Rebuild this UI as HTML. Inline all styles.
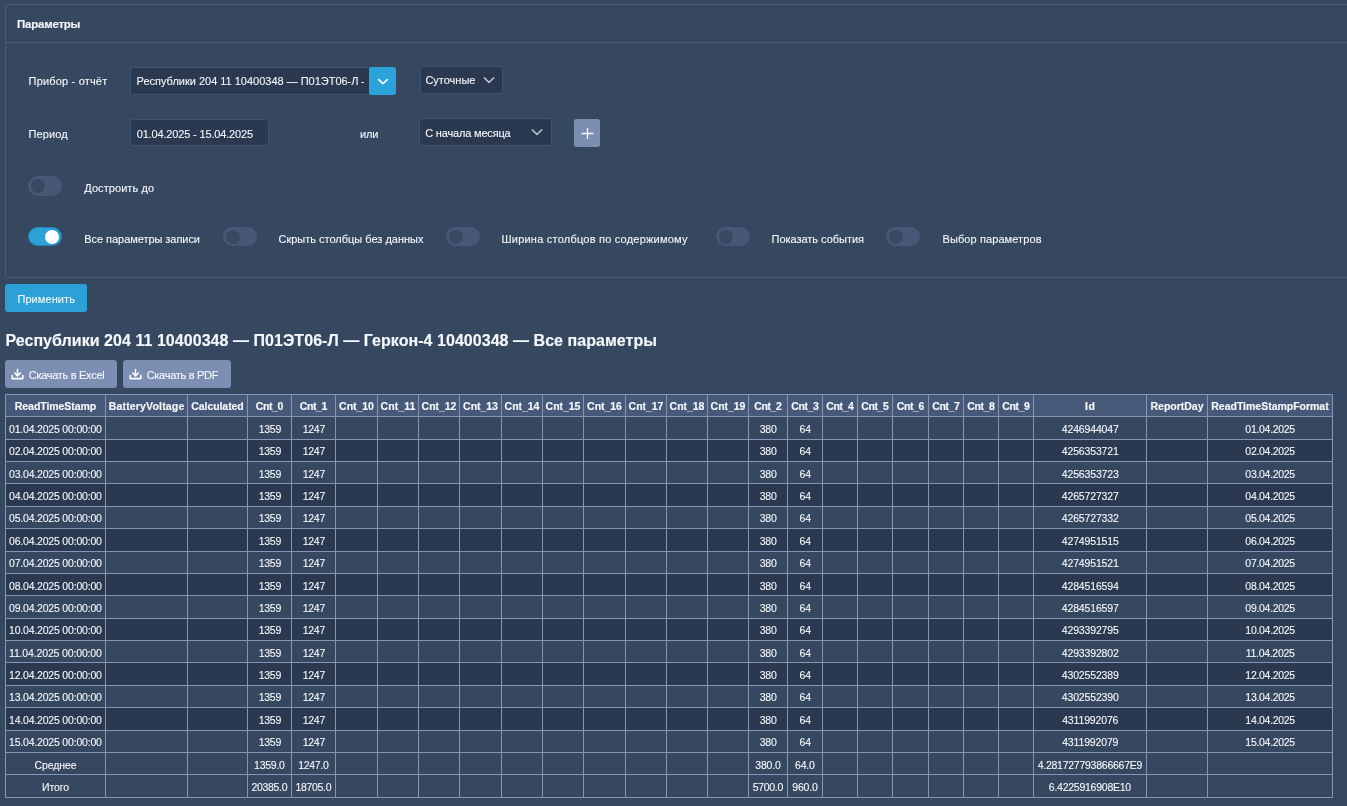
<!DOCTYPE html>
<html lang="ru"><head><meta charset="utf-8"><title>Параметры</title>
<style>
html,body{margin:0;padding:0;background:#36485f;}
body{width:1347px;height:806px;overflow:hidden;position:relative;will-change:transform;font-family:"Liberation Sans",sans-serif;}
.b{position:absolute;box-sizing:border-box;}
.t{position:absolute;white-space:pre;-webkit-text-stroke:0.1px currentColor;}
</style></head><body>
<div class="b" style="left:5px;top:4px;width:1360px;height:274px;border:1px solid #4a5c78;border-radius:3px;"></div>
<div class="b" style="left:6px;top:42px;width:1360px;height:1px;background:#4a5c78;"></div>
<div class="t" style="left:17.10px;top:16.20px;font-size:11.5px;line-height:16px;color:#f2f5fa;font-weight:bold;-webkit-text-stroke:0.15px currentColor;letter-spacing:-0.251px;">Параметры</div>
<div class="t" style="left:28.60px;top:73.40px;font-size:11px;line-height:16px;color:#f6f8fc;letter-spacing:0.178px;">Прибор - отчёт</div>
<div class="b" style="left:130px;top:67px;width:266px;height:28px;background:#2a3850;border:1px solid #3f5270;border-radius:3px;"></div>
<div class="b" style="left:131px;top:69px;width:233.4px;height:25px;overflow:hidden">
<div class="t" style="left:5.60px;top:3.90px;font-size:11px;line-height:16px;color:#f4f7fb;letter-spacing:-0.010px;white-space:nowrap;">Республики 204 11 10400348 — П01ЭТ06-Л — Геркон-4 10400348</div>
</div>
<div class="b" style="left:369px;top:67px;width:27px;height:28px;background:#2aa3db;border-radius:2px 3px 3px 2px;"></div>
<svg class="b" style="left:377.2px;top:76.5px" width="12" height="9" viewBox="0 0 12 9"><path d="M1.7 2.7 L6 6.6 L10.3 2.7" fill="none" stroke="#f2fbff" stroke-width="1.8" stroke-linecap="round" stroke-linejoin="round"/></svg>
<div class="b" style="left:420px;top:66px;width:83px;height:28px;background:#2a3850;border:1px solid #3f5270;border-radius:3px;"></div>
<div class="t" style="left:425.40px;top:72.20px;font-size:11px;line-height:16px;color:#f6f8fc;letter-spacing:-0.009px;">Суточные</div>
<svg class="b" style="left:483.3px;top:76.2px" width="12" height="9" viewBox="0 0 12 9"><path d="M1.3 1.9 L6 6.4 L10.7 1.9" fill="none" stroke="#b3bed0" stroke-width="1.5" stroke-linecap="round" stroke-linejoin="round"/></svg>
<div class="t" style="left:28.40px;top:125.80px;font-size:11px;line-height:16px;color:#f6f8fc;letter-spacing:0.144px;">Период</div>
<div class="b" style="left:130px;top:119px;width:139px;height:27px;background:#2a3850;border:1px solid #3f5270;border-radius:3px;"></div>
<div class="t" style="left:136.70px;top:125.80px;font-size:11px;line-height:16px;color:#f4f7fb;letter-spacing:-0.158px;">01.04.2025 - 15.04.2025</div>
<div class="t" style="left:360.00px;top:125.70px;font-size:11px;line-height:16px;color:#f6f8fc;letter-spacing:-0.154px;">или</div>
<div class="b" style="left:419px;top:118px;width:133px;height:28px;background:#2a3850;border:1px solid #3f5270;border-radius:3px;"></div>
<div class="t" style="left:425.20px;top:125.00px;font-size:11px;line-height:16px;color:#f6f8fc;letter-spacing:-0.175px;">С начала месяца</div>
<svg class="b" style="left:531px;top:128.2px" width="12" height="9" viewBox="0 0 12 9"><path d="M1.3 1.9 L6 6.4 L10.7 1.9" fill="none" stroke="#b3bed0" stroke-width="1.5" stroke-linecap="round" stroke-linejoin="round"/></svg>
<div class="b" style="left:574px;top:119px;width:26px;height:28px;background:#7c8eb2;border-radius:2.5px;"></div>
<svg class="b" style="left:581px;top:127px" width="13" height="13" viewBox="0 0 13 13"><path d="M6.5 0.9 V12.1 M0.6 6.5 H12.4" fill="none" stroke="#fff" stroke-width="1.3"/></svg>
<div class="b" style="left:28px;top:176.1px;width:33.6px;height:19.5px;background:#465876;border-radius:10px;"></div>
<div class="b" style="left:30.6px;top:179.0px;width:14px;height:14px;background:#384962;border-radius:7px;"></div>
<div class="t" style="left:84.30px;top:179.90px;font-size:11px;line-height:16px;color:#f6f8fc;letter-spacing:0.066px;">Достроить до</div>
<div class="b" style="left:28px;top:226.6px;width:33.6px;height:19.5px;background:#2ba1d8;border:1px solid #2381b4;border-radius:10px;"></div>
<div class="b" style="left:45px;top:229.5px;width:14px;height:14px;background:#ffffff;border-radius:7px;"></div>
<div class="t" style="left:84.30px;top:231.00px;font-size:11px;line-height:16px;color:#f6f8fc;letter-spacing:-0.051px;">Все параметры записи</div>
<div class="b" style="left:223.2px;top:226.6px;width:33.6px;height:19.5px;background:#465876;border-radius:10px;"></div>
<div class="b" style="left:225.79999999999998px;top:229.5px;width:14px;height:14px;background:#384962;border-radius:7px;"></div>
<div class="t" style="left:278.50px;top:231.00px;font-size:11px;line-height:16px;color:#f6f8fc;letter-spacing:-0.005px;">Скрыть столбцы без данных</div>
<div class="b" style="left:446.2px;top:226.6px;width:33.6px;height:19.5px;background:#465876;border-radius:10px;"></div>
<div class="b" style="left:448.8px;top:229.5px;width:14px;height:14px;background:#384962;border-radius:7px;"></div>
<div class="t" style="left:501.50px;top:231.00px;font-size:11px;line-height:16px;color:#f6f8fc;letter-spacing:0.221px;">Ширина столбцов по содержимому</div>
<div class="b" style="left:716px;top:226.6px;width:33.6px;height:19.5px;background:#465876;border-radius:10px;"></div>
<div class="b" style="left:718.6px;top:229.5px;width:14px;height:14px;background:#384962;border-radius:7px;"></div>
<div class="t" style="left:771.50px;top:231.00px;font-size:11px;line-height:16px;color:#f6f8fc;letter-spacing:-0.027px;">Показать события</div>
<div class="b" style="left:886.4px;top:226.6px;width:33.6px;height:19.5px;background:#465876;border-radius:10px;"></div>
<div class="b" style="left:889.0px;top:229.5px;width:14px;height:14px;background:#384962;border-radius:7px;"></div>
<div class="t" style="left:942.50px;top:231.00px;font-size:11px;line-height:16px;color:#f6f8fc;letter-spacing:0.095px;">Выбор параметров</div>
<div class="b" style="left:5px;top:284px;width:82px;height:28px;background:#2ba1d8;border-radius:3px;"></div>
<div class="t" style="left:17.40px;top:291.20px;font-size:11px;line-height:16px;color:#eefaff;letter-spacing:0.083px;">Применить</div>
<div class="t" style="left:5.40px;top:329.50px;font-size:16px;line-height:22px;color:#f4f7fb;font-weight:bold;-webkit-text-stroke:0.15px currentColor;letter-spacing:0.046px;">Республики 204 11 10400348 — П01ЭТ06-Л — Геркон-4 10400348 — Все параметры</div>
<div class="b" style="left:5px;top:360px;width:112px;height:28px;background:#7c8eb2;border-radius:3px;"></div>
<svg class="b" style="left:10.5px;top:368.2px" width="13" height="12" viewBox="0 0 13 12"><path d="M6.5 1.5 V7.6 M3.6 5 L6.5 7.9 L9.4 5" fill="none" stroke="#fff" stroke-width="1.5" stroke-linecap="round" stroke-linejoin="round"/><path d="M1.2 7.6 V10.6 H11.8 V7.6" fill="none" stroke="#fff" stroke-width="1.6" stroke-linecap="round" stroke-linejoin="round"/></svg>
<div class="t" style="left:28.80px;top:367.30px;font-size:11px;line-height:16px;color:#f7f9fc;letter-spacing:-0.300px;">Скачать в Excel</div>
<div class="b" style="left:123px;top:360px;width:108px;height:28px;background:#7c8eb2;border-radius:3px;"></div>
<svg class="b" style="left:128.7px;top:368.2px" width="13" height="12" viewBox="0 0 13 12"><path d="M6.5 1.5 V7.6 M3.6 5 L6.5 7.9 L9.4 5" fill="none" stroke="#fff" stroke-width="1.5" stroke-linecap="round" stroke-linejoin="round"/><path d="M1.2 7.6 V10.6 H11.8 V7.6" fill="none" stroke="#fff" stroke-width="1.6" stroke-linecap="round" stroke-linejoin="round"/></svg>
<div class="t" style="left:146.70px;top:367.30px;font-size:11px;line-height:16px;color:#f7f9fc;letter-spacing:-0.284px;">Скачать в PDF</div>
<div class="b" style="left:5px;top:394.00px;width:1328px;height:22px;background:#465978"></div>
<div class="b" style="left:5px;top:416.00px;width:1328px;height:23px;background:#36485f"></div>
<div class="b" style="left:5px;top:439.00px;width:1328px;height:22px;background:#2b3950"></div>
<div class="b" style="left:5px;top:461.00px;width:1328px;height:22px;background:#36485f"></div>
<div class="b" style="left:5px;top:483.00px;width:1328px;height:23px;background:#2b3950"></div>
<div class="b" style="left:5px;top:506.00px;width:1328px;height:22px;background:#36485f"></div>
<div class="b" style="left:5px;top:528.00px;width:1328px;height:23px;background:#2b3950"></div>
<div class="b" style="left:5px;top:551.00px;width:1328px;height:22px;background:#36485f"></div>
<div class="b" style="left:5px;top:573.00px;width:1328px;height:22px;background:#2b3950"></div>
<div class="b" style="left:5px;top:595.00px;width:1328px;height:23px;background:#36485f"></div>
<div class="b" style="left:5px;top:618.00px;width:1328px;height:22px;background:#2b3950"></div>
<div class="b" style="left:5px;top:640.00px;width:1328px;height:22px;background:#36485f"></div>
<div class="b" style="left:5px;top:662.00px;width:1328px;height:23px;background:#2b3950"></div>
<div class="b" style="left:5px;top:685.00px;width:1328px;height:22px;background:#36485f"></div>
<div class="b" style="left:5px;top:707.00px;width:1328px;height:23px;background:#2b3950"></div>
<div class="b" style="left:5px;top:730.00px;width:1328px;height:22px;background:#36485f"></div>
<div class="b" style="left:5px;top:752.00px;width:1328px;height:22px;background:#36485f"></div>
<div class="b" style="left:5px;top:774.00px;width:1328px;height:23px;background:#36485f"></div>
<div class="b" style="left:5px;top:394.00px;width:1328px;height:1px;background:#8495b5"></div>
<div class="b" style="left:5px;top:416.00px;width:1328px;height:1px;background:#8495b5"></div>
<div class="b" style="left:5px;top:439.00px;width:1328px;height:1px;background:#8495b5"></div>
<div class="b" style="left:5px;top:461.00px;width:1328px;height:1px;background:#8495b5"></div>
<div class="b" style="left:5px;top:483.00px;width:1328px;height:1px;background:#8495b5"></div>
<div class="b" style="left:5px;top:506.00px;width:1328px;height:1px;background:#8495b5"></div>
<div class="b" style="left:5px;top:528.00px;width:1328px;height:1px;background:#8495b5"></div>
<div class="b" style="left:5px;top:551.00px;width:1328px;height:1px;background:#8495b5"></div>
<div class="b" style="left:5px;top:573.00px;width:1328px;height:1px;background:#8495b5"></div>
<div class="b" style="left:5px;top:595.00px;width:1328px;height:1px;background:#8495b5"></div>
<div class="b" style="left:5px;top:618.00px;width:1328px;height:1px;background:#8495b5"></div>
<div class="b" style="left:5px;top:640.00px;width:1328px;height:1px;background:#8495b5"></div>
<div class="b" style="left:5px;top:662.00px;width:1328px;height:1px;background:#8495b5"></div>
<div class="b" style="left:5px;top:685.00px;width:1328px;height:1px;background:#8495b5"></div>
<div class="b" style="left:5px;top:707.00px;width:1328px;height:1px;background:#8495b5"></div>
<div class="b" style="left:5px;top:730.00px;width:1328px;height:1px;background:#8495b5"></div>
<div class="b" style="left:5px;top:752.00px;width:1328px;height:1px;background:#8495b5"></div>
<div class="b" style="left:5px;top:774.00px;width:1328px;height:1px;background:#8495b5"></div>
<div class="b" style="left:5px;top:797.00px;width:1328px;height:1px;background:#8495b5"></div>
<div class="b" style="left:5px;top:394.00px;width:1px;height:404.00px;background:#8495b5"></div>
<div class="b" style="left:105px;top:394.00px;width:1px;height:404.00px;background:#8495b5"></div>
<div class="b" style="left:187px;top:394.00px;width:1px;height:404.00px;background:#8495b5"></div>
<div class="b" style="left:247px;top:394.00px;width:1px;height:404.00px;background:#8495b5"></div>
<div class="b" style="left:291px;top:394.00px;width:1px;height:404.00px;background:#8495b5"></div>
<div class="b" style="left:335px;top:394.00px;width:1px;height:404.00px;background:#8495b5"></div>
<div class="b" style="left:377px;top:394.00px;width:1px;height:404.00px;background:#8495b5"></div>
<div class="b" style="left:418px;top:394.00px;width:1px;height:404.00px;background:#8495b5"></div>
<div class="b" style="left:459px;top:394.00px;width:1px;height:404.00px;background:#8495b5"></div>
<div class="b" style="left:501px;top:394.00px;width:1px;height:404.00px;background:#8495b5"></div>
<div class="b" style="left:542px;top:394.00px;width:1px;height:404.00px;background:#8495b5"></div>
<div class="b" style="left:583px;top:394.00px;width:1px;height:404.00px;background:#8495b5"></div>
<div class="b" style="left:625px;top:394.00px;width:1px;height:404.00px;background:#8495b5"></div>
<div class="b" style="left:666px;top:394.00px;width:1px;height:404.00px;background:#8495b5"></div>
<div class="b" style="left:707px;top:394.00px;width:1px;height:404.00px;background:#8495b5"></div>
<div class="b" style="left:748px;top:394.00px;width:1px;height:404.00px;background:#8495b5"></div>
<div class="b" style="left:787px;top:394.00px;width:1px;height:404.00px;background:#8495b5"></div>
<div class="b" style="left:822px;top:394.00px;width:1px;height:404.00px;background:#8495b5"></div>
<div class="b" style="left:857px;top:394.00px;width:1px;height:404.00px;background:#8495b5"></div>
<div class="b" style="left:892px;top:394.00px;width:1px;height:404.00px;background:#8495b5"></div>
<div class="b" style="left:928px;top:394.00px;width:1px;height:404.00px;background:#8495b5"></div>
<div class="b" style="left:963px;top:394.00px;width:1px;height:404.00px;background:#8495b5"></div>
<div class="b" style="left:998px;top:394.00px;width:1px;height:404.00px;background:#8495b5"></div>
<div class="b" style="left:1033px;top:394.00px;width:1px;height:404.00px;background:#8495b5"></div>
<div class="b" style="left:1146px;top:394.00px;width:1px;height:404.00px;background:#8495b5"></div>
<div class="b" style="left:1207px;top:394.00px;width:1px;height:404.00px;background:#8495b5"></div>
<div class="b" style="left:1332px;top:394.00px;width:1px;height:404.00px;background:#8495b5"></div>
<div class="t" style="left:14.80px;top:398.30px;font-size:10.5px;line-height:16px;color:#f6f8fc;font-weight:bold;-webkit-text-stroke:0.15px currentColor;letter-spacing:-0.057px;">ReadTimeStamp</div>
<div class="t" style="left:108.75px;top:398.30px;font-size:10.5px;line-height:16px;color:#f6f8fc;font-weight:bold;-webkit-text-stroke:0.15px currentColor;letter-spacing:0.167px;">BatteryVoltage</div>
<div class="t" style="left:191.25px;top:398.30px;font-size:10.5px;line-height:16px;color:#f6f8fc;font-weight:bold;-webkit-text-stroke:0.15px currentColor;letter-spacing:-0.067px;">Calculated</div>
<div class="t" style="left:255.70px;top:398.30px;font-size:10.5px;line-height:16px;color:#f6f8fc;font-weight:bold;-webkit-text-stroke:0.15px currentColor;letter-spacing:-0.393px;">Cnt_0</div>
<div class="t" style="left:299.70px;top:398.30px;font-size:10.5px;line-height:16px;color:#f6f8fc;font-weight:bold;-webkit-text-stroke:0.15px currentColor;letter-spacing:-0.393px;">Cnt_1</div>
<div class="t" style="left:339.12px;top:398.30px;font-size:10.5px;line-height:16px;color:#f6f8fc;font-weight:bold;-webkit-text-stroke:0.15px currentColor;letter-spacing:-0.053px;">Cnt_10</div>
<div class="t" style="left:380.62px;top:398.30px;font-size:10.5px;line-height:16px;color:#f6f8fc;font-weight:bold;-webkit-text-stroke:0.15px currentColor;letter-spacing:0.063px;">Cnt_11</div>
<div class="t" style="left:421.62px;top:398.30px;font-size:10.5px;line-height:16px;color:#f6f8fc;font-weight:bold;-webkit-text-stroke:0.15px currentColor;letter-spacing:-0.053px;">Cnt_12</div>
<div class="t" style="left:463.12px;top:398.30px;font-size:10.5px;line-height:16px;color:#f6f8fc;font-weight:bold;-webkit-text-stroke:0.15px currentColor;letter-spacing:-0.053px;">Cnt_13</div>
<div class="t" style="left:504.62px;top:398.30px;font-size:10.5px;line-height:16px;color:#f6f8fc;font-weight:bold;-webkit-text-stroke:0.15px currentColor;letter-spacing:-0.053px;">Cnt_14</div>
<div class="t" style="left:545.62px;top:398.30px;font-size:10.5px;line-height:16px;color:#f6f8fc;font-weight:bold;-webkit-text-stroke:0.15px currentColor;letter-spacing:-0.053px;">Cnt_15</div>
<div class="t" style="left:587.12px;top:398.30px;font-size:10.5px;line-height:16px;color:#f6f8fc;font-weight:bold;-webkit-text-stroke:0.15px currentColor;letter-spacing:-0.053px;">Cnt_16</div>
<div class="t" style="left:628.62px;top:398.30px;font-size:10.5px;line-height:16px;color:#f6f8fc;font-weight:bold;-webkit-text-stroke:0.15px currentColor;letter-spacing:-0.053px;">Cnt_17</div>
<div class="t" style="left:669.62px;top:398.30px;font-size:10.5px;line-height:16px;color:#f6f8fc;font-weight:bold;-webkit-text-stroke:0.15px currentColor;letter-spacing:-0.053px;">Cnt_18</div>
<div class="t" style="left:710.62px;top:398.30px;font-size:10.5px;line-height:16px;color:#f6f8fc;font-weight:bold;-webkit-text-stroke:0.15px currentColor;letter-spacing:-0.053px;">Cnt_19</div>
<div class="t" style="left:754.20px;top:398.30px;font-size:10.5px;line-height:16px;color:#f6f8fc;font-weight:bold;-webkit-text-stroke:0.15px currentColor;letter-spacing:-0.393px;">Cnt_2</div>
<div class="t" style="left:791.20px;top:398.30px;font-size:10.5px;line-height:16px;color:#f6f8fc;font-weight:bold;-webkit-text-stroke:0.15px currentColor;letter-spacing:-0.393px;">Cnt_3</div>
<div class="t" style="left:826.20px;top:398.30px;font-size:10.5px;line-height:16px;color:#f6f8fc;font-weight:bold;-webkit-text-stroke:0.15px currentColor;letter-spacing:-0.393px;">Cnt_4</div>
<div class="t" style="left:861.20px;top:398.30px;font-size:10.5px;line-height:16px;color:#f6f8fc;font-weight:bold;-webkit-text-stroke:0.15px currentColor;letter-spacing:-0.393px;">Cnt_5</div>
<div class="t" style="left:896.70px;top:398.30px;font-size:10.5px;line-height:16px;color:#f6f8fc;font-weight:bold;-webkit-text-stroke:0.15px currentColor;letter-spacing:-0.393px;">Cnt_6</div>
<div class="t" style="left:932.20px;top:398.30px;font-size:10.5px;line-height:16px;color:#f6f8fc;font-weight:bold;-webkit-text-stroke:0.15px currentColor;letter-spacing:-0.393px;">Cnt_7</div>
<div class="t" style="left:967.20px;top:398.30px;font-size:10.5px;line-height:16px;color:#f6f8fc;font-weight:bold;-webkit-text-stroke:0.15px currentColor;letter-spacing:-0.393px;">Cnt_8</div>
<div class="t" style="left:1002.20px;top:398.30px;font-size:10.5px;line-height:16px;color:#f6f8fc;font-weight:bold;-webkit-text-stroke:0.15px currentColor;letter-spacing:-0.393px;">Cnt_9</div>
<div class="t" style="left:1085.00px;top:398.30px;font-size:10.5px;line-height:16px;color:#f6f8fc;font-weight:bold;-webkit-text-stroke:0.15px currentColor;letter-spacing:0.669px;">Id</div>
<div class="t" style="left:1150.50px;top:398.30px;font-size:10.5px;line-height:16px;color:#f6f8fc;font-weight:bold;-webkit-text-stroke:0.15px currentColor;letter-spacing:-0.012px;">ReportDay</div>
<div class="t" style="left:1211.30px;top:398.30px;font-size:10.5px;line-height:16px;color:#f6f8fc;font-weight:bold;-webkit-text-stroke:0.15px currentColor;letter-spacing:-0.015px;">ReadTimeStampFormat</div>
<div class="t" style="left:9.00px;top:420.78px;font-size:10.5px;line-height:16px;color:#f6f8fc;letter-spacing:-0.191px;">01.04.2025 00:00:00</div>
<div class="t" style="left:258.70px;top:420.78px;font-size:10.5px;line-height:16px;color:#f6f8fc;letter-spacing:-0.250px;">1359</div>
<div class="t" style="left:302.77px;top:420.78px;font-size:10.5px;line-height:16px;color:#f6f8fc;letter-spacing:-0.300px;">1247</div>
<div class="t" style="left:759.64px;top:420.78px;font-size:10.5px;line-height:16px;color:#f6f8fc;letter-spacing:-0.100px;">380</div>
<div class="t" style="left:799.56px;top:420.78px;font-size:10.5px;line-height:16px;color:#f6f8fc;letter-spacing:-0.200px;">64</div>
<div class="t" style="left:1061.78px;top:420.78px;font-size:10.5px;line-height:16px;color:#f6f8fc;letter-spacing:-0.150px;">4246944047</div>
<div class="t" style="left:1245.37px;top:420.78px;font-size:10.5px;line-height:16px;color:#f6f8fc;letter-spacing:-0.300px;">01.04.2025</div>
<div class="t" style="left:9.00px;top:443.18px;font-size:10.5px;line-height:16px;color:#f6f8fc;letter-spacing:-0.191px;">02.04.2025 00:00:00</div>
<div class="t" style="left:258.70px;top:443.18px;font-size:10.5px;line-height:16px;color:#f6f8fc;letter-spacing:-0.250px;">1359</div>
<div class="t" style="left:302.77px;top:443.18px;font-size:10.5px;line-height:16px;color:#f6f8fc;letter-spacing:-0.300px;">1247</div>
<div class="t" style="left:759.64px;top:443.18px;font-size:10.5px;line-height:16px;color:#f6f8fc;letter-spacing:-0.100px;">380</div>
<div class="t" style="left:799.56px;top:443.18px;font-size:10.5px;line-height:16px;color:#f6f8fc;letter-spacing:-0.200px;">64</div>
<div class="t" style="left:1061.78px;top:443.18px;font-size:10.5px;line-height:16px;color:#f6f8fc;letter-spacing:-0.150px;">4256353721</div>
<div class="t" style="left:1245.37px;top:443.18px;font-size:10.5px;line-height:16px;color:#f6f8fc;letter-spacing:-0.300px;">02.04.2025</div>
<div class="t" style="left:9.00px;top:465.56px;font-size:10.5px;line-height:16px;color:#f6f8fc;letter-spacing:-0.191px;">03.04.2025 00:00:00</div>
<div class="t" style="left:258.70px;top:465.56px;font-size:10.5px;line-height:16px;color:#f6f8fc;letter-spacing:-0.250px;">1359</div>
<div class="t" style="left:302.77px;top:465.56px;font-size:10.5px;line-height:16px;color:#f6f8fc;letter-spacing:-0.300px;">1247</div>
<div class="t" style="left:759.64px;top:465.56px;font-size:10.5px;line-height:16px;color:#f6f8fc;letter-spacing:-0.100px;">380</div>
<div class="t" style="left:799.56px;top:465.56px;font-size:10.5px;line-height:16px;color:#f6f8fc;letter-spacing:-0.200px;">64</div>
<div class="t" style="left:1061.78px;top:465.56px;font-size:10.5px;line-height:16px;color:#f6f8fc;letter-spacing:-0.150px;">4256353723</div>
<div class="t" style="left:1245.37px;top:465.56px;font-size:10.5px;line-height:16px;color:#f6f8fc;letter-spacing:-0.300px;">03.04.2025</div>
<div class="t" style="left:9.00px;top:487.95px;font-size:10.5px;line-height:16px;color:#f6f8fc;letter-spacing:-0.191px;">04.04.2025 00:00:00</div>
<div class="t" style="left:258.70px;top:487.95px;font-size:10.5px;line-height:16px;color:#f6f8fc;letter-spacing:-0.250px;">1359</div>
<div class="t" style="left:302.77px;top:487.95px;font-size:10.5px;line-height:16px;color:#f6f8fc;letter-spacing:-0.300px;">1247</div>
<div class="t" style="left:759.64px;top:487.95px;font-size:10.5px;line-height:16px;color:#f6f8fc;letter-spacing:-0.100px;">380</div>
<div class="t" style="left:799.56px;top:487.95px;font-size:10.5px;line-height:16px;color:#f6f8fc;letter-spacing:-0.200px;">64</div>
<div class="t" style="left:1061.78px;top:487.95px;font-size:10.5px;line-height:16px;color:#f6f8fc;letter-spacing:-0.150px;">4265727327</div>
<div class="t" style="left:1245.37px;top:487.95px;font-size:10.5px;line-height:16px;color:#f6f8fc;letter-spacing:-0.300px;">04.04.2025</div>
<div class="t" style="left:9.00px;top:510.35px;font-size:10.5px;line-height:16px;color:#f6f8fc;letter-spacing:-0.191px;">05.04.2025 00:00:00</div>
<div class="t" style="left:258.70px;top:510.35px;font-size:10.5px;line-height:16px;color:#f6f8fc;letter-spacing:-0.250px;">1359</div>
<div class="t" style="left:302.77px;top:510.35px;font-size:10.5px;line-height:16px;color:#f6f8fc;letter-spacing:-0.300px;">1247</div>
<div class="t" style="left:759.64px;top:510.35px;font-size:10.5px;line-height:16px;color:#f6f8fc;letter-spacing:-0.100px;">380</div>
<div class="t" style="left:799.56px;top:510.35px;font-size:10.5px;line-height:16px;color:#f6f8fc;letter-spacing:-0.200px;">64</div>
<div class="t" style="left:1061.78px;top:510.35px;font-size:10.5px;line-height:16px;color:#f6f8fc;letter-spacing:-0.150px;">4265727332</div>
<div class="t" style="left:1245.37px;top:510.35px;font-size:10.5px;line-height:16px;color:#f6f8fc;letter-spacing:-0.300px;">05.04.2025</div>
<div class="t" style="left:9.00px;top:532.74px;font-size:10.5px;line-height:16px;color:#f6f8fc;letter-spacing:-0.191px;">06.04.2025 00:00:00</div>
<div class="t" style="left:258.70px;top:532.74px;font-size:10.5px;line-height:16px;color:#f6f8fc;letter-spacing:-0.250px;">1359</div>
<div class="t" style="left:302.77px;top:532.74px;font-size:10.5px;line-height:16px;color:#f6f8fc;letter-spacing:-0.300px;">1247</div>
<div class="t" style="left:759.64px;top:532.74px;font-size:10.5px;line-height:16px;color:#f6f8fc;letter-spacing:-0.100px;">380</div>
<div class="t" style="left:799.56px;top:532.74px;font-size:10.5px;line-height:16px;color:#f6f8fc;letter-spacing:-0.200px;">64</div>
<div class="t" style="left:1061.78px;top:532.74px;font-size:10.5px;line-height:16px;color:#f6f8fc;letter-spacing:-0.150px;">4274951515</div>
<div class="t" style="left:1245.37px;top:532.74px;font-size:10.5px;line-height:16px;color:#f6f8fc;letter-spacing:-0.300px;">06.04.2025</div>
<div class="t" style="left:9.00px;top:555.12px;font-size:10.5px;line-height:16px;color:#f6f8fc;letter-spacing:-0.191px;">07.04.2025 00:00:00</div>
<div class="t" style="left:258.70px;top:555.12px;font-size:10.5px;line-height:16px;color:#f6f8fc;letter-spacing:-0.250px;">1359</div>
<div class="t" style="left:302.77px;top:555.12px;font-size:10.5px;line-height:16px;color:#f6f8fc;letter-spacing:-0.300px;">1247</div>
<div class="t" style="left:759.64px;top:555.12px;font-size:10.5px;line-height:16px;color:#f6f8fc;letter-spacing:-0.100px;">380</div>
<div class="t" style="left:799.56px;top:555.12px;font-size:10.5px;line-height:16px;color:#f6f8fc;letter-spacing:-0.200px;">64</div>
<div class="t" style="left:1061.78px;top:555.12px;font-size:10.5px;line-height:16px;color:#f6f8fc;letter-spacing:-0.150px;">4274951521</div>
<div class="t" style="left:1245.37px;top:555.12px;font-size:10.5px;line-height:16px;color:#f6f8fc;letter-spacing:-0.300px;">07.04.2025</div>
<div class="t" style="left:9.00px;top:577.52px;font-size:10.5px;line-height:16px;color:#f6f8fc;letter-spacing:-0.191px;">08.04.2025 00:00:00</div>
<div class="t" style="left:258.70px;top:577.52px;font-size:10.5px;line-height:16px;color:#f6f8fc;letter-spacing:-0.250px;">1359</div>
<div class="t" style="left:302.77px;top:577.52px;font-size:10.5px;line-height:16px;color:#f6f8fc;letter-spacing:-0.300px;">1247</div>
<div class="t" style="left:759.64px;top:577.52px;font-size:10.5px;line-height:16px;color:#f6f8fc;letter-spacing:-0.100px;">380</div>
<div class="t" style="left:799.56px;top:577.52px;font-size:10.5px;line-height:16px;color:#f6f8fc;letter-spacing:-0.200px;">64</div>
<div class="t" style="left:1061.78px;top:577.52px;font-size:10.5px;line-height:16px;color:#f6f8fc;letter-spacing:-0.150px;">4284516594</div>
<div class="t" style="left:1245.37px;top:577.52px;font-size:10.5px;line-height:16px;color:#f6f8fc;letter-spacing:-0.300px;">08.04.2025</div>
<div class="t" style="left:9.00px;top:599.90px;font-size:10.5px;line-height:16px;color:#f6f8fc;letter-spacing:-0.191px;">09.04.2025 00:00:00</div>
<div class="t" style="left:258.70px;top:599.90px;font-size:10.5px;line-height:16px;color:#f6f8fc;letter-spacing:-0.250px;">1359</div>
<div class="t" style="left:302.77px;top:599.90px;font-size:10.5px;line-height:16px;color:#f6f8fc;letter-spacing:-0.300px;">1247</div>
<div class="t" style="left:759.64px;top:599.90px;font-size:10.5px;line-height:16px;color:#f6f8fc;letter-spacing:-0.100px;">380</div>
<div class="t" style="left:799.56px;top:599.90px;font-size:10.5px;line-height:16px;color:#f6f8fc;letter-spacing:-0.200px;">64</div>
<div class="t" style="left:1061.78px;top:599.90px;font-size:10.5px;line-height:16px;color:#f6f8fc;letter-spacing:-0.150px;">4284516597</div>
<div class="t" style="left:1245.37px;top:599.90px;font-size:10.5px;line-height:16px;color:#f6f8fc;letter-spacing:-0.300px;">09.04.2025</div>
<div class="t" style="left:9.00px;top:622.30px;font-size:10.5px;line-height:16px;color:#f6f8fc;letter-spacing:-0.191px;">10.04.2025 00:00:00</div>
<div class="t" style="left:258.70px;top:622.30px;font-size:10.5px;line-height:16px;color:#f6f8fc;letter-spacing:-0.250px;">1359</div>
<div class="t" style="left:302.77px;top:622.30px;font-size:10.5px;line-height:16px;color:#f6f8fc;letter-spacing:-0.300px;">1247</div>
<div class="t" style="left:759.64px;top:622.30px;font-size:10.5px;line-height:16px;color:#f6f8fc;letter-spacing:-0.100px;">380</div>
<div class="t" style="left:799.56px;top:622.30px;font-size:10.5px;line-height:16px;color:#f6f8fc;letter-spacing:-0.200px;">64</div>
<div class="t" style="left:1061.78px;top:622.30px;font-size:10.5px;line-height:16px;color:#f6f8fc;letter-spacing:-0.150px;">4293392795</div>
<div class="t" style="left:1245.37px;top:622.30px;font-size:10.5px;line-height:16px;color:#f6f8fc;letter-spacing:-0.300px;">10.04.2025</div>
<div class="t" style="left:9.00px;top:644.69px;font-size:10.5px;line-height:16px;color:#f6f8fc;letter-spacing:-0.148px;">11.04.2025 00:00:00</div>
<div class="t" style="left:258.70px;top:644.69px;font-size:10.5px;line-height:16px;color:#f6f8fc;letter-spacing:-0.250px;">1359</div>
<div class="t" style="left:302.77px;top:644.69px;font-size:10.5px;line-height:16px;color:#f6f8fc;letter-spacing:-0.300px;">1247</div>
<div class="t" style="left:759.64px;top:644.69px;font-size:10.5px;line-height:16px;color:#f6f8fc;letter-spacing:-0.100px;">380</div>
<div class="t" style="left:799.56px;top:644.69px;font-size:10.5px;line-height:16px;color:#f6f8fc;letter-spacing:-0.200px;">64</div>
<div class="t" style="left:1061.78px;top:644.69px;font-size:10.5px;line-height:16px;color:#f6f8fc;letter-spacing:-0.150px;">4293392802</div>
<div class="t" style="left:1245.76px;top:644.69px;font-size:10.5px;line-height:16px;color:#f6f8fc;letter-spacing:-0.300px;">11.04.2025</div>
<div class="t" style="left:9.00px;top:667.08px;font-size:10.5px;line-height:16px;color:#f6f8fc;letter-spacing:-0.191px;">12.04.2025 00:00:00</div>
<div class="t" style="left:258.70px;top:667.08px;font-size:10.5px;line-height:16px;color:#f6f8fc;letter-spacing:-0.250px;">1359</div>
<div class="t" style="left:302.77px;top:667.08px;font-size:10.5px;line-height:16px;color:#f6f8fc;letter-spacing:-0.300px;">1247</div>
<div class="t" style="left:759.64px;top:667.08px;font-size:10.5px;line-height:16px;color:#f6f8fc;letter-spacing:-0.100px;">380</div>
<div class="t" style="left:799.56px;top:667.08px;font-size:10.5px;line-height:16px;color:#f6f8fc;letter-spacing:-0.200px;">64</div>
<div class="t" style="left:1061.78px;top:667.08px;font-size:10.5px;line-height:16px;color:#f6f8fc;letter-spacing:-0.150px;">4302552389</div>
<div class="t" style="left:1245.37px;top:667.08px;font-size:10.5px;line-height:16px;color:#f6f8fc;letter-spacing:-0.300px;">12.04.2025</div>
<div class="t" style="left:9.00px;top:689.47px;font-size:10.5px;line-height:16px;color:#f6f8fc;letter-spacing:-0.191px;">13.04.2025 00:00:00</div>
<div class="t" style="left:258.70px;top:689.47px;font-size:10.5px;line-height:16px;color:#f6f8fc;letter-spacing:-0.250px;">1359</div>
<div class="t" style="left:302.77px;top:689.47px;font-size:10.5px;line-height:16px;color:#f6f8fc;letter-spacing:-0.300px;">1247</div>
<div class="t" style="left:759.64px;top:689.47px;font-size:10.5px;line-height:16px;color:#f6f8fc;letter-spacing:-0.100px;">380</div>
<div class="t" style="left:799.56px;top:689.47px;font-size:10.5px;line-height:16px;color:#f6f8fc;letter-spacing:-0.200px;">64</div>
<div class="t" style="left:1061.78px;top:689.47px;font-size:10.5px;line-height:16px;color:#f6f8fc;letter-spacing:-0.150px;">4302552390</div>
<div class="t" style="left:1245.37px;top:689.47px;font-size:10.5px;line-height:16px;color:#f6f8fc;letter-spacing:-0.300px;">13.04.2025</div>
<div class="t" style="left:9.00px;top:711.86px;font-size:10.5px;line-height:16px;color:#f6f8fc;letter-spacing:-0.191px;">14.04.2025 00:00:00</div>
<div class="t" style="left:258.70px;top:711.86px;font-size:10.5px;line-height:16px;color:#f6f8fc;letter-spacing:-0.250px;">1359</div>
<div class="t" style="left:302.77px;top:711.86px;font-size:10.5px;line-height:16px;color:#f6f8fc;letter-spacing:-0.300px;">1247</div>
<div class="t" style="left:759.64px;top:711.86px;font-size:10.5px;line-height:16px;color:#f6f8fc;letter-spacing:-0.100px;">380</div>
<div class="t" style="left:799.56px;top:711.86px;font-size:10.5px;line-height:16px;color:#f6f8fc;letter-spacing:-0.200px;">64</div>
<div class="t" style="left:1062.17px;top:711.86px;font-size:10.5px;line-height:16px;color:#f6f8fc;letter-spacing:-0.150px;">4311992076</div>
<div class="t" style="left:1245.37px;top:711.86px;font-size:10.5px;line-height:16px;color:#f6f8fc;letter-spacing:-0.300px;">14.04.2025</div>
<div class="t" style="left:9.00px;top:734.25px;font-size:10.5px;line-height:16px;color:#f6f8fc;letter-spacing:-0.191px;">15.04.2025 00:00:00</div>
<div class="t" style="left:258.70px;top:734.25px;font-size:10.5px;line-height:16px;color:#f6f8fc;letter-spacing:-0.250px;">1359</div>
<div class="t" style="left:302.77px;top:734.25px;font-size:10.5px;line-height:16px;color:#f6f8fc;letter-spacing:-0.300px;">1247</div>
<div class="t" style="left:759.64px;top:734.25px;font-size:10.5px;line-height:16px;color:#f6f8fc;letter-spacing:-0.100px;">380</div>
<div class="t" style="left:799.56px;top:734.25px;font-size:10.5px;line-height:16px;color:#f6f8fc;letter-spacing:-0.200px;">64</div>
<div class="t" style="left:1062.17px;top:734.25px;font-size:10.5px;line-height:16px;color:#f6f8fc;letter-spacing:-0.150px;">4311992079</div>
<div class="t" style="left:1245.37px;top:734.25px;font-size:10.5px;line-height:16px;color:#f6f8fc;letter-spacing:-0.300px;">15.04.2025</div>
<div class="t" style="left:34.48px;top:756.63px;font-size:10.5px;line-height:16px;color:#f6f8fc;letter-spacing:-0.100px;">Среднее</div>
<div class="t" style="left:254.07px;top:756.63px;font-size:10.5px;line-height:16px;color:#f6f8fc;letter-spacing:-0.250px;">1359.0</div>
<div class="t" style="left:298.19px;top:756.63px;font-size:10.5px;line-height:16px;color:#f6f8fc;letter-spacing:-0.300px;">1247.0</div>
<div class="t" style="left:755.26px;top:756.63px;font-size:10.5px;line-height:16px;color:#f6f8fc;letter-spacing:-0.200px;">380.0</div>
<div class="t" style="left:795.08px;top:756.63px;font-size:10.5px;line-height:16px;color:#f6f8fc;letter-spacing:-0.200px;">64.0</div>
<div class="t" style="left:1037.65px;top:756.63px;font-size:10.5px;line-height:16px;color:#f6f8fc;letter-spacing:-0.250px;">4.281727793866667E9</div>
<div class="t" style="left:41.94px;top:779.03px;font-size:10.5px;line-height:16px;color:#f6f8fc;letter-spacing:-0.100px;">Итого</div>
<div class="t" style="left:251.42px;top:779.03px;font-size:10.5px;line-height:16px;color:#f6f8fc;letter-spacing:-0.300px;">20385.0</div>
<div class="t" style="left:295.42px;top:779.03px;font-size:10.5px;line-height:16px;color:#f6f8fc;letter-spacing:-0.300px;">18705.0</div>
<div class="t" style="left:752.69px;top:779.03px;font-size:10.5px;line-height:16px;color:#f6f8fc;letter-spacing:-0.300px;">5700.0</div>
<div class="t" style="left:792.26px;top:779.03px;font-size:10.5px;line-height:16px;color:#f6f8fc;letter-spacing:-0.200px;">960.0</div>
<div class="t" style="left:1048.83px;top:779.03px;font-size:10.5px;line-height:16px;color:#f6f8fc;letter-spacing:-0.250px;">6.4225916908E10</div>
</body></html>
